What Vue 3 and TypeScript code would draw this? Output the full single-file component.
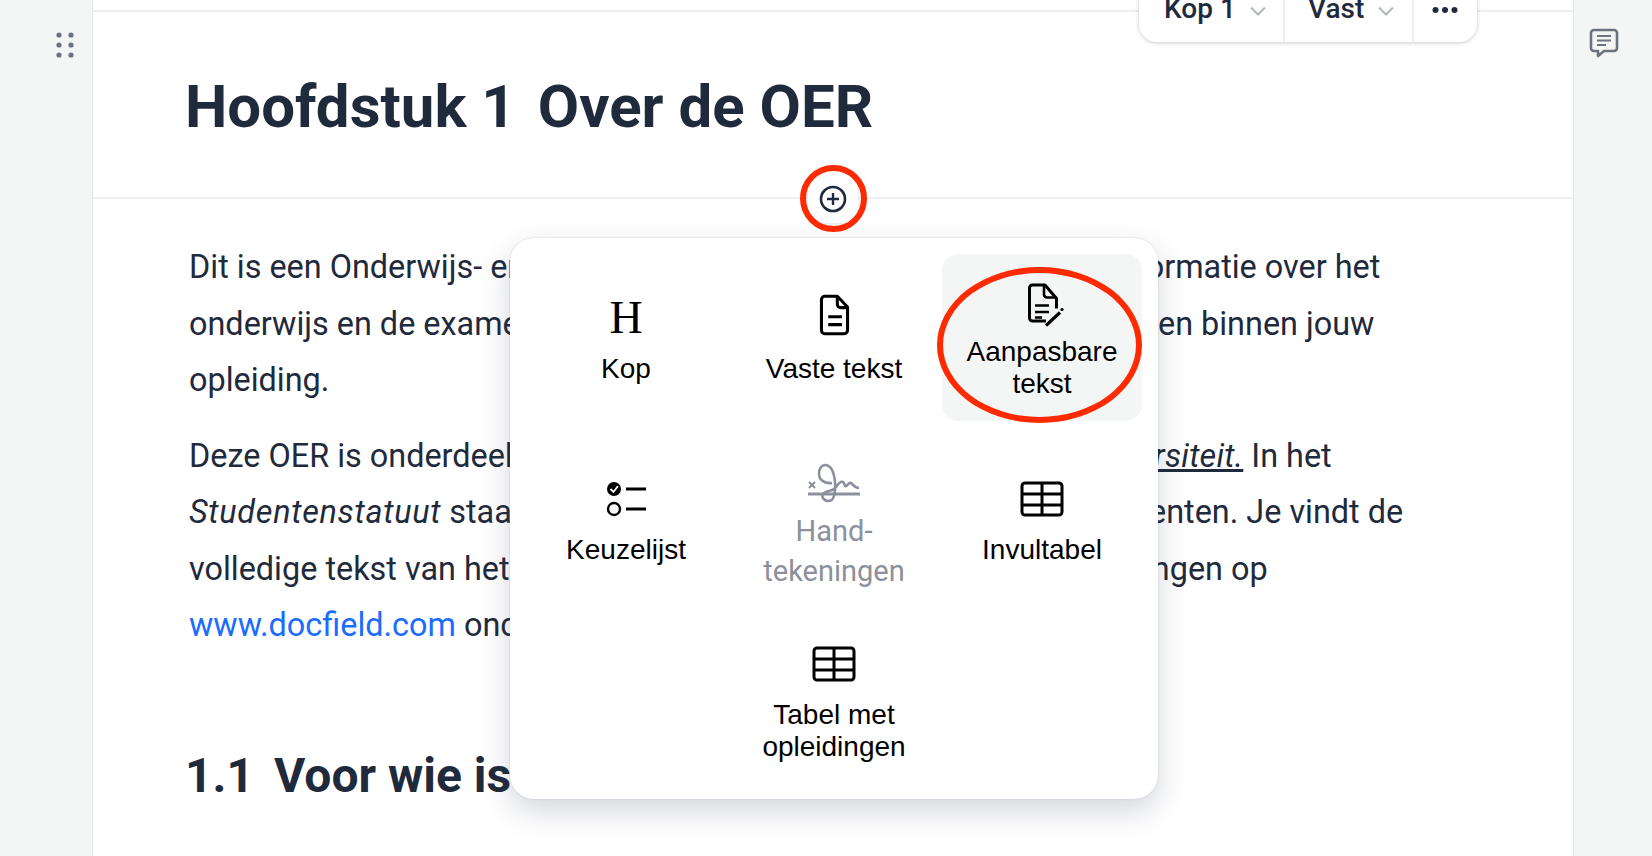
<script setup lang="ts">
const docLines = 'M9 6h11l9 9.5V36a3 3 0 0 1-3 3H9a3 3 0 0 1-3-3V9a3 3 0 0 1 3-3z'
</script>

<template>
  <div class="screen">
    <aside class="gutter">
      <svg class="grip" width="20" height="26" viewBox="0 0 20 26">
        <g fill="#6b7280">
          <circle cx="3" cy="3" r="2.6" /><circle cx="15" cy="3" r="2.6" />
          <circle cx="3" cy="13" r="2.6" /><circle cx="15" cy="13" r="2.6" />
          <circle cx="3" cy="23" r="2.6" /><circle cx="15" cy="23" r="2.6" />
        </g>
      </svg>
    </aside>

    <main class="page">
      <div class="top-strip"></div>

      <div class="toolbar">
        <div class="tool tool-kop">Kop 1
          <svg width="16" height="10" viewBox="0 0 16 10"><path d="M1 1.500l7 7 7-7" fill="none" stroke="#b3b6bd" stroke-width="2" /></svg>
        </div>
        <div class="tool tool-vast">Vast
          <svg width="16" height="10" viewBox="0 0 16 10"><path d="M1 1.500l7 7 7-7" fill="none" stroke="#b3b6bd" stroke-width="2" /></svg>
        </div>
        <div class="tool tool-more">
          <svg width="26" height="8" viewBox="0 0 26 8"><g fill="#1f2a3c"><circle cx="3.500" cy="4" r="3" /><circle cx="13" cy="4" r="3" /><circle cx="22.500" cy="4" r="3" /></g></svg>
        </div>
      </div>

      <header class="title-block">
        <h1><span class="num">Hoofdstuk 1</span>Over de OER</h1>
      </header>

      <button type="button" class="add-btn">
        <svg width="30" height="30" viewBox="0 0 30 30">
          <circle cx="15" cy="15" r="12" fill="none" stroke="#1f2a3c" stroke-width="2.600" />
          <path d="M15 9v12M9 15h12" stroke="#1f2a3c" stroke-width="2.400" />
        </svg>
      </button>
      <span class="ring ring-add"></span>

      <section class="body">
        <p>Dit is een Onderwijs- en Examenregeling (OER). Hierin vind je de informatie over het<br />onderwijs en de examens in jouw opleiding, en de regels die nu gelden binnen jouw<br />opleiding.</p>
        <p>Deze OER is onderdeel van het Studentenstatuut van de Open <em class="uni"><u>Universiteit.</u></em> In het<br /><em>Studentenstatuut</em> staan alle rechten en alle plichten voor onze studenten. Je vindt de<br />volledige tekst van het Studentenstatuut en voor onze andere regelingen op<br /><a>www.docfield.com</a> onder documenten.</p>
        <h2><span class="num2">1.1</span>Voor wie is deze OER?</h2>
      </section>

      <div class="insert-menu">
        <div class="cell">
          <span class="h-icon">H</span>
          <span class="label">Kop</span>
        </div>
        <div class="cell">
          <svg width="31" height="42" viewBox="4 4 27 37" fill="none" stroke="#000" stroke-width="2.700" stroke-linejoin="round">
            <path :d="docLines" />
            <path d="M20 6v7a3 3 0 0 0 3 3h6M12 24h12M12 31h12" />
          </svg>
          <span class="label">Vaste tekst</span>
        </div>
        <div class="cell active">
          <svg width="46" height="46" viewBox="0 -5.500 46 46" fill="none" stroke="#000" stroke-width="3" stroke-linejoin="round">
            <path d="M37.500 27V17L26 3.500H13.500a3 3 0 0 0-3 3v30a3 3 0 0 0 3 3H27" />
            <path d="M25 3.500V13a3 3 0 0 0 3 3h9.500M16 24h14M16 30.500h14M16 36h7" stroke-width="2.600" />
            <path d="M27 44l14-13" stroke-width="3.200" />
            <circle cx="43" cy="28" r="1.600" fill="#000" stroke="none" />
          </svg>
          <span class="label">Aanpasbare<br />tekst</span>
        </div>

        <div class="cell cell-check">
          <svg width="42" height="40" viewBox="0 0 42 40">
            <circle cx="9" cy="10" r="7" fill="#000" />
            <path d="M5.500 10l3 3 4.500-6" fill="none" stroke="#fff" stroke-width="1.800" />
            <circle cx="9" cy="30" r="6" fill="none" stroke="#000" stroke-width="2.400" />
            <path d="M21 10h20M21 30h20" stroke="#000" stroke-width="3" />
          </svg>
          <span class="label">Keuzelijst</span>
        </div>
        <div class="cell disabled">
          <svg width="58" height="44" viewBox="0 0 58 44" fill="none" stroke="#8b909c">
            <path d="M4 24l6 6M10 24l-6 6" stroke-width="2" />
            <path d="M3 36h52" stroke-width="3" />
            <path d="M27 25C20 26 14 22 14 16 14 10 17 7 20 7 26 7 29 14 30 24 31 34 29 43 24 43 19 43 16 39 18 36 21 32 28 34 31 29 33 26 36 23 38 24 40 25 39 29 41 28 43 27 44 24 46 25 48 26 49 30 54 30" stroke-width="2.600" />
          </svg>
          <span class="label">Hand-<br />tekeningen</span>
        </div>
        <div class="cell">
          <svg width="44" height="36" viewBox="0 0 44 36" fill="none" stroke="#000" stroke-width="3">
            <rect x="2" y="2" width="40" height="32" rx="3" />
            <path d="M2 13h40M2 24h40M22 2v32" />
          </svg>
          <span class="label">Invultabel</span>
        </div>

        <div class="cell cell-mid">
          <svg width="44" height="36" viewBox="0 0 44 36" fill="none" stroke="#000" stroke-width="3">
            <rect x="2" y="2" width="40" height="32" rx="3" />
            <path d="M2 13h40M2 24h40M22 2v32" />
          </svg>
          <span class="label">Tabel met<br />opleidingen</span>
        </div>
      </div>
      <span class="ring ring-cell"></span>
    </main>

    <aside class="side">
      <svg width="30" height="30" viewBox="0 0 30 30" fill="none" stroke="#6b7280">
        <path d="M5 2h20a3 3 0 0 1 3 3v15a3 3 0 0 1-3 3H15l-6 5v-5H5a3 3 0 0 1-3-3V5a3 3 0 0 1 3-3z" stroke-width="2.600" stroke-linejoin="round" />
        <path d="M8 8h14M8 12.500h14M8 17h9" stroke-width="1.800" />
      </svg>
    </aside>
  </div>
</template>

<style>
html, body { margin: 0; background: #fff; }
</style>

<style scoped>
.screen {
  display: grid;
  grid-template-columns: 92px 1fr 78px;
  width: 1652px;
  height: 856px;
  overflow: hidden;
  background: #f4f6f6;
  font-family: Roboto, "Liberation Sans", sans-serif;
  color: #1f2a3c;
}
.gutter { padding: 32px 0 0 56px; }
.grip { display: block; }
.side { padding: 28px 0 0 15px; }
.page {
  position: relative;
  background: #fff;
  border-left: 1px solid #e3e5ea;
  border-right: 1px solid #e3e5ea;
}
.top-strip { height: 10px; border-bottom: 2px solid #eeeff1; }
.title-block {
  height: 187px;
  box-sizing: border-box;
  padding: 59px 0 0 92px;
  border-bottom: 2px solid #eeeff1;
}
h1 { margin: 0; font-size: 60px; line-height: 72px; font-weight: 700; }
.num { margin-right: 22px; }
.body { padding: 40px 96px 0; font-size: 32.400px; line-height: 56.500px; white-space: nowrap; }
.body em { letter-spacing: 0.7px; }
.body em.uni { letter-spacing: 0.2px; }
p { margin: 0 0 19px; }
a { color: #1a6dff; }
h2 { margin: 94px 0 0 -4px; font-size: 48px; line-height: 56px; font-weight: 700; }
.num2 { margin-right: 20px; }

.toolbar {
  position: absolute;
  top: -30px;
  left: 1046px;
  display: flex;
  height: 72px;
  width: 338px;
  background: #fff;
  border-radius: 0 0 18px 18px;
  box-shadow: 0 1px 4px rgba(60, 70, 100, 0.28);
  font-size: 28px;
  font-weight: 500;
}
.tool {
  box-sizing: border-box;
  display: flex;
  align-items: flex-end;
  gap: 14px;
  padding: 0 0 17px 25px;
  border-right: 2px solid #eeeff1;
  line-height: 32px;
}
.tool svg { margin-bottom: 9px; }
.tool-kop { width: 146px; }
.tool-vast { width: 129px; padding-left: 23px; }
.tool-more { width: 63px; padding: 0 0 28px 18px; border-right: 0; }
.tool-more svg { margin: 0; }

.add-btn {
  position: absolute;
  top: 175px;
  left: 715px;
  display: flex;
  align-items: center;
  justify-content: center;
  width: 50px;
  height: 48px;
  padding: 0;
  border: 0;
  border-radius: 6px;
  background: #fff;
  box-shadow: 0 1px 3px rgba(60, 70, 100, 0.18);
}
.ring {
  position: absolute;
  box-sizing: border-box;
  border: 6px solid #ff2a00;
  border-radius: 50%;
}
.ring-add { top: 165px; left: 707px; width: 67px; height: 67px; }
.ring-cell { top: 267px; left: 844px; width: 205px; height: 156px; }

.insert-menu {
  position: absolute;
  top: 238px;
  left: 417px;
  box-sizing: border-box;
  width: 648px;
  display: grid;
  grid-template-columns: repeat(3, 200px);
  grid-template-rows: 167px 186px 160px;
  gap: 8px;
  padding: 16px;
  background: #fff;
  border-radius: 24px;
  box-shadow: 0 0 2px rgba(60, 70, 100, 0.2), 0 12px 30px rgba(60, 70, 100, 0.22);
}
.cell {
  display: flex;
  flex-direction: column;
  align-items: center;
  justify-content: center;
  gap: 17px;
  padding-top: 3px;
  box-sizing: border-box;
  border-radius: 16px;
  color: #000;
  font-family: "Liberation Sans", Arial, sans-serif;
  font-size: 28px;
  line-height: 32px;
  text-align: center;
}
.cell svg { overflow: visible; }
.cell.active { background: #f4f6f6; gap: 14px; padding-top: 0; }
.cell-check { gap: 15px; padding-top: 1px; }
.cell-mid { grid-column: 2; }
.cell.disabled { color: #8b909c; font-family: Roboto, sans-serif; font-size: 29px; line-height: 40px; gap: 9px; padding-top: 5px; }
.h-icon {
  font-family: "Liberation Serif", serif;
  font-size: 46px;
  height: 42px;
  line-height: 48px;
}
.label { display: block; }
</style>
